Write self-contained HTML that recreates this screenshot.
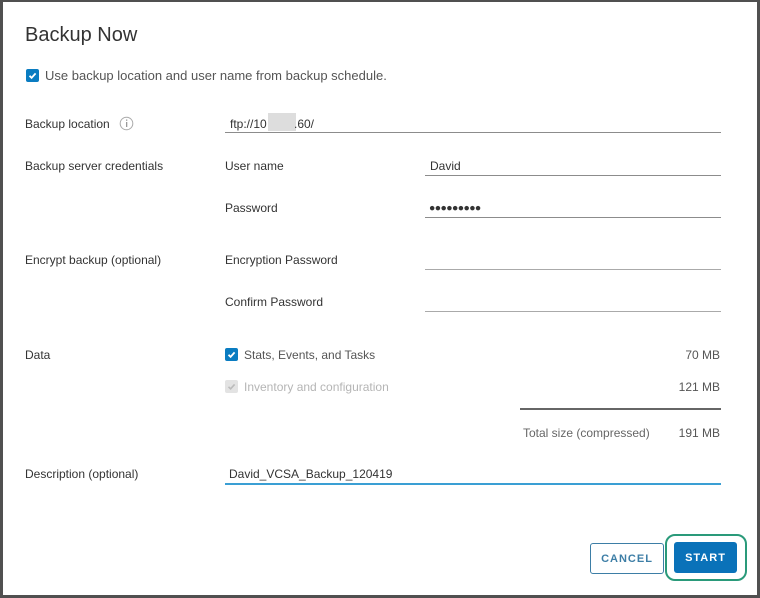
<!DOCTYPE html>
<html><head><style>
*{margin:0;padding:0;box-sizing:border-box}
body{width:760px;height:598px;background:#fff;position:relative;overflow:hidden;font-family:"Liberation Sans",sans-serif;color:#333}
.fr{position:absolute;left:0;top:0;width:760px;height:598px;border-style:solid;border-color:#505050;border-width:2px 3px 3px 3px}
.t{position:absolute;font-size:12px;line-height:14px;white-space:nowrap}
.r{position:absolute;font-size:12px;line-height:14px;white-space:nowrap;right:40px;text-align:right}
.ln{position:absolute;height:1px;background:#8c8c8c}
.cb{position:absolute;width:13px;height:13px;border-radius:2px;background:#0a7cc1}
.cb svg{position:absolute;left:0;top:0}
</style></head><body>
<div class="fr"></div>
<div class="t" style="left:25px;top:23px;font-size:20px;line-height:24px;color:#333">Backup Now</div>

<div class="cb" style="left:26px;top:69px"><svg width="13" height="13"><path d="M3.5 6.8 L5.6 8.8 L9.6 4.4" stroke="#fff" stroke-width="1.8" fill="none"/></svg></div>
<div class="t" style="left:45px;top:69px;font-size:13px;color:#555">Use backup location and user name from backup schedule.</div>

<div class="t" style="left:25px;top:117px">Backup location</div>
<svg style="position:absolute;left:119px;top:116px" width="15" height="15"><circle cx="7.5" cy="7.5" r="6.3" stroke="#aaa" fill="none"/><rect x="7" y="6" width="1.3" height="5" fill="#999"/><rect x="7" y="3.5" width="1.3" height="1.3" fill="#999"/></svg>
<div class="t" style="left:230px;top:117px">ftp://10</div>
<div style="position:absolute;left:268px;top:113px;width:28px;height:18px;background:#ddd"></div>
<div class="t" style="left:294px;top:117px">.60/</div>
<div class="ln" style="left:225px;top:132px;width:496px"></div>

<div class="t" style="left:25px;top:159px">Backup server credentials</div>
<div class="t" style="left:225px;top:159px">User name</div>
<div class="t" style="left:430px;top:159px">David</div>
<div class="ln" style="left:425px;top:175px;width:296px"></div>

<div class="t" style="left:225px;top:201px">Password</div>
<div class="t" style="left:429px;top:201px;font-size:10.5px;letter-spacing:-0.6px">●●●●●●●●●</div>
<div class="ln" style="left:425px;top:217px;width:296px"></div>

<div class="t" style="left:25px;top:253px">Encrypt backup (optional)</div>
<div class="t" style="left:225px;top:253px">Encryption Password</div>
<div class="ln" style="left:425px;top:269px;width:296px;background:#aaa"></div>

<div class="t" style="left:225px;top:295px">Confirm Password</div>
<div class="ln" style="left:425px;top:311px;width:296px;background:#aaa"></div>

<div class="t" style="left:25px;top:348px">Data</div>
<div class="cb" style="left:225px;top:348px"><svg width="13" height="13"><path d="M3.5 6.8 L5.6 8.8 L9.6 4.4" stroke="#fff" stroke-width="1.8" fill="none"/></svg></div>
<div class="t" style="left:244px;top:348px;color:#555">Stats, Events, and Tasks</div>
<div class="r" style="top:348px;color:#555">70 MB</div>

<div class="cb" style="left:225px;top:380px;background:#e3e3e3"><svg width="13" height="13"><path d="M3.5 6.8 L5.6 8.8 L9.6 4.4" stroke="#bbb" stroke-width="1.6" fill="none"/></svg></div>
<div class="t" style="left:244px;top:380px;color:#b5b5b5">Inventory and configuration</div>
<div class="r" style="top:380px;color:#555">121 MB</div>

<div style="position:absolute;left:520px;top:408px;width:201px;height:2px;background:#666"></div>
<div class="t" style="left:523px;top:426px;color:#666">Total size (compressed)</div>
<div class="r" style="top:426px;color:#555">191 MB</div>

<div class="t" style="left:25px;top:467px">Description (optional)</div>
<div class="t" style="left:229px;top:467px">David_VCSA_Backup_120419</div>
<div style="position:absolute;left:225px;top:483px;width:496px;height:2px;background:#3a9fd4"></div>

<div style="position:absolute;left:590px;top:543px;width:74px;height:31px;border:1px solid #3d7ea6;border-radius:3px;color:#3d7ea6;font-size:11px;font-weight:bold;letter-spacing:1px;text-align:center;line-height:31px">CANCEL</div>
<div style="position:absolute;left:665px;top:534px;width:82px;height:47px;border:2px solid #2a9a7a;border-radius:10px"></div>
<div style="position:absolute;left:674px;top:542px;width:63px;height:31px;background:#0a72b9;border-radius:3px;color:#fff;font-size:11px;font-weight:bold;letter-spacing:1px;text-align:center;line-height:33px">START</div>
</body></html>
